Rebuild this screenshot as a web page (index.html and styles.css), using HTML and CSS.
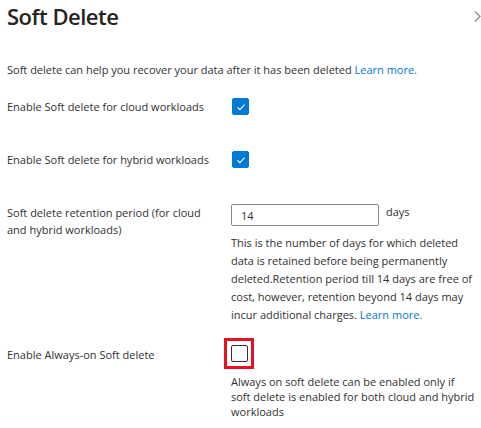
FILE: index.html
```html
<!DOCTYPE html>
<html>
<head>
<meta charset="utf-8">
<link rel="stylesheet" href="styles.css">
</head>
<body>
<div class="panel">
  <div class="header">
    <h1 class="title">Soft Delete</h1>
    <svg class="chev" width="7" height="11" viewBox="0 0 7 11"><path d="M1 0.5 L6 5.5 L1 10.5" fill="none" stroke="#8a8886" stroke-width="1.2"/></svg>
  </div>
  <p class="intro">Soft delete can help you recover your data after it has been deleted <a class="link" href="#">Learn more.</a></p>

  <div class="row row-cloud">
    <div class="label">Enable Soft delete for cloud workloads</div>
    <div class="control">
      <span class="cb checked"><svg width="12" height="12" viewBox="0 0 12 12"><path d="M2.5 6.3 L4.9 8.6 L9.6 3.6" fill="none" stroke="#fff" stroke-width="1.1"/></svg></span>
    </div>
  </div>

  <div class="row row-hybrid">
    <div class="label">Enable Soft delete for hybrid workloads</div>
    <div class="control">
      <span class="cb checked"><svg width="12" height="12" viewBox="0 0 12 12"><path d="M2.5 6.3 L4.9 8.6 L9.6 3.6" fill="none" stroke="#fff" stroke-width="1.1"/></svg></span>
    </div>
  </div>

  <div class="row row-ret">
    <div class="label">Soft delete retention period (for cloud and hybrid workloads)</div>
    <div class="control">
      <div class="inputline">
        <div class="input">14</div>
        <span class="unit">days</span>
      </div>
      <p class="desc">This is the number of days for which deleted data is retained before being permanently deleted.Retention period till 14 days are free of cost, however, retention beyond 14 days may incur additional charges. <a class="link" href="#">Learn more.</a></p>
    </div>
  </div>

  <div class="row row-always">
    <div class="label">Enable Always-on Soft delete</div>
    <div class="control">
      <div class="highlight"><span class="cb"></span></div>
      <p class="desc desc2">Always on soft delete can be enabled only if<br>soft delete is enabled for both cloud and hybrid workloads</p>
    </div>
  </div>
</div>
</body>
</html>
```
FILE: styles.css
```css
* { box-sizing: border-box; }
html, body { margin: 0; padding: 0; background: #fff; }
body {
  font-family: "Open Sans", "Noto Sans", sans-serif;
  font-size: 11px;
  color: #323130;
  width: 481px;
  height: 428px;
  overflow: hidden;
}
.panel { padding: 0 0 0 7px; }
.header {
  display: flex;
  align-items: center;
  justify-content: space-between;
  height: 32px;
}
.title {
  margin: 0;
  font-size: 22px;
  line-height: 32px;
  font-weight: 600;
  color: #252423;
  letter-spacing: -0.5px;
}
.chev { margin-right: 0; margin-top: 0; }
.intro { margin: 29px 0 0; line-height: 18px; }
.link { color: #0078d4; text-decoration: none; }
.row {
  display: grid;
  grid-template-columns: 224px 1fr;
  align-items: start;
}
.label { line-height: 17px; max-width: 208px; }
.row-cloud { margin-top: 19px; }
.row-hybrid { margin-top: 36px; }
.row-ret { margin-top: 36px; }
.row-always { margin-top: 22px; }
.cb {
  display: flex;
  align-items: center;
  justify-content: center;
  width: 17px;
  height: 17px;
  border-radius: 2px;
  border: 1px solid #323130;
  background: #fff;
  margin-left: 1px;
}
.cb.checked { background: #0078d4; border-color: #0078d4; }
.inputline { display: flex; align-items: flex-start; gap: 7px; }
.input {
  width: 148px;
  height: 22px;
  border: 1px solid #8a8886;
  border-radius: 2px;
  padding: 3px 9px;
  line-height: 16px;
}
.unit { line-height: 18px; margin-top: -1px; }
.desc { margin: 8px 0 0; line-height: 18px; width: 248px; }
.highlight {
  width: 30px;
  height: 31px;
  border: 3px solid #e81123;
  display: flex;
  align-items: center;
  justify-content: center;
  margin-left: -7px;
  margin-top: -8px;
}
.highlight .cb { margin-left: 0; }
.desc2 { margin-top: 5px; line-height: 15px; width: 250px; }
```
